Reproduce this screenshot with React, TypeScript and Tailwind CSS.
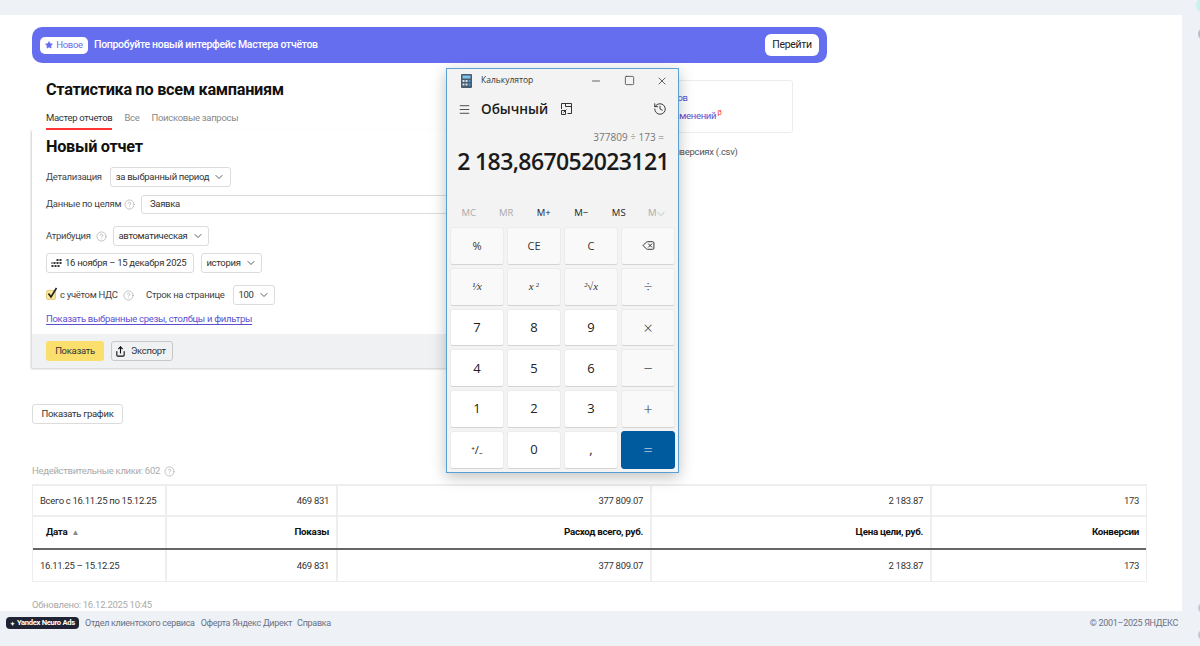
import { ChevronDown, CircleHelp, Delete, History, Menu, Minus, Share, Square, Star, X } from "lucide-react";

const CALC_KEYS = [
  { label: "%", kind: "fn" },
  { label: "CE", kind: "fn" },
  { label: "C", kind: "fn" },
  { label: "back", kind: "fn" },
  { label: "1/x", kind: "fn" },
  { label: "x2", kind: "fn" },
  { label: "root", kind: "fn" },
  { label: "÷", kind: "op" },
  { label: "7", kind: "num" },
  { label: "8", kind: "num" },
  { label: "9", kind: "num" },
  { label: "×", kind: "op" },
  { label: "4", kind: "num" },
  { label: "5", kind: "num" },
  { label: "6", kind: "num" },
  { label: "−", kind: "op" },
  { label: "1", kind: "num" },
  { label: "2", kind: "num" },
  { label: "3", kind: "num" },
  { label: "+", kind: "op" },
  { label: "+/-", kind: "num" },
  { label: "0", kind: "num" },
  { label: ",", kind: "num" },
  { label: "=", kind: "eq" },
];

const COLS = ["w-[134px]", "w-[171px]", "w-[314px]", "w-[280px]", "flex-1"];

function Help() {
  return <CircleHelp className="h-[11px] w-[11px] shrink-0 text-[#a9a9a9]" strokeWidth={1.5} />;
}

function Select({ label, className = "" }: { label: string; className?: string }) {
  return (
    <div className={`flex h-[20px] items-center justify-center gap-[4px] whitespace-nowrap rounded-[3px] border border-[#dcdcdc] bg-white text-[#333] ${className}`}>
      {label}
      <ChevronDown className="h-3 w-3" strokeWidth={1.6} />
    </div>
  );
}

function KeyLabel({ label }: { label: string }) {
  if (label === "back") return <Delete className="h-[13px] w-[13px] text-[#333]" strokeWidth={1.8} />;
  if (label === "1/x") return <span className="font-['Liberation_Serif',serif] text-[11px] italic">¹⁄x</span>;
  if (label === "x2")
    return (
      <span className="font-['Liberation_Serif',serif] text-[11px] italic">
        x<sup className="ml-[2px] text-[7px] not-italic">2</sup>
      </span>
    );
  if (label === "root") return <span className="font-['Liberation_Serif',serif] text-[11px] italic">²√x</span>;
  if (label === "+/-") return <span className="text-[11px]">⁺/₋</span>;
  return <span>{label}</span>;
}

function Calculator() {
  return (
    <div className="absolute left-[446px] top-[68px] flex h-[405px] w-[233px] flex-col border border-[#5a9fd4] bg-[#f3f3f3] font-['Open_Sans',sans-serif] tracking-normal text-[#1a1a1a] shadow-[0_4px_14px_rgba(0,0,0,0.25)]">
      <div className="flex h-[23px] items-center pl-[14px] text-[8.5px] text-[#333]">
        <svg width="11" height="14" viewBox="0 0 11 14" className="shrink-0">
          <rect width="11" height="14" rx="1" fill="#4a5b6c" />
          <rect x="1.5" y="1.5" width="8" height="3" fill="#7fc4ea" />
          <rect x="1.5" y="6" width="2" height="2" fill="#d8e4ec" />
          <rect x="4.5" y="6" width="2" height="2" fill="#d8e4ec" />
          <rect x="7.5" y="6" width="2" height="2" fill="#3b9be0" />
          <rect x="1.5" y="9.5" width="2" height="2" fill="#d8e4ec" />
          <rect x="4.5" y="9.5" width="2" height="2" fill="#d8e4ec" />
          <rect x="7.5" y="9.5" width="2" height="2" fill="#3b9be0" />
        </svg>
        <span className="ml-[9px]">Калькулятор</span>
        <div className="ml-auto flex items-center gap-[21.5px] pr-[10px]">
          <Minus className="h-3 w-3" strokeWidth={1.5} />
          <Square className="h-[11px] w-[11px]" strokeWidth={1.6} />
          <X className="h-3 w-3" strokeWidth={1.5} />
        </div>
      </div>
      <div className="mt-[4px] flex h-[26px] items-center pl-[11px] pr-[11px]">
        <Menu className="h-[13px] w-[13px]" strokeWidth={1.4} />
        <span className="ml-[10px] text-[13.5px] font-semibold">Обычный</span>
        <svg width="12" height="12" viewBox="0 0 12 12" className="ml-[13px]" fill="none" stroke="#333" strokeWidth="1">
          <path d="M.5 6V.5h10v10H6.5M4.5 .5v3M4.5 3.5h6" />
          <path d="M.5 7.5h4v4h-4zM5.5 6.5l-3 3" />
        </svg>
        <History className="ml-auto h-[14px] w-[14px]" strokeWidth={1.4} />
      </div>
      <div className="mt-[8px] pr-[14px] text-right text-[10px] leading-[14px] text-[#777]">377809 ÷ 173 =</div>
      <div className="mr-[9px] mt-[1px] text-right text-[23px] font-semibold leading-[32px] tracking-[-0.6px] whitespace-nowrap">2 183,867052023121</div>
      <div className="mt-[29px] grid grid-cols-6 px-[3px] text-center text-[9.5px] leading-[14px] font-medium">
        <span className="font-normal text-[#aaa]">MC</span>
        <span className="font-normal text-[#aaa]">MR</span>
        <span className="text-[#222]">M+</span>
        <span className="text-[#222]">M−</span>
        <span className="text-[#222]">MS</span>
        <span className="font-normal text-[#aaa]">M⌵</span>
      </div>
      <div className="mt-[7px] grid flex-1 grid-cols-4 grid-rows-6 gap-[3px] px-[3px] pb-[3px]">
        {CALC_KEYS.map((key) => (
          <div
            key={key.label}
            className={`flex items-center justify-center rounded-[3px] border ${
              key.kind === "eq"
                ? "border-[#005a9e] bg-[#005a9e] text-[16px] font-light text-white"
                : key.kind === "num"
                  ? "border-[#ececec] border-b-[#d4d4d4] bg-white text-[13px] text-[#222]"
                  : "border-[#ececec] border-b-[#d4d4d4] bg-[#f9f9f9] text-[#333]"
            } ${key.kind === "fn" ? "text-[11px]" : ""} ${key.kind === "op" ? "text-[16px] font-light" : ""}`}
          >
            <KeyLabel label={key.label} />
          </div>
        ))}
      </div>
    </div>
  );
}

function Row({ cells, className = "", bold = false }: { cells: string[]; className?: string; bold?: boolean }) {
  return (
    <div className={`flex ${className}`}>
      {cells.map((cell, i) => (
        <div
          key={i}
          className={`flex items-center whitespace-nowrap border-r-2 border-[#eeeeee] last:border-r-0 ${COLS[i]} ${i === 0 ? (bold ? "pl-[13px]" : "pl-[7px]") : "justify-end pr-[7px]"} ${bold ? "text-[9.8px] font-bold text-[#111]" : "text-[#333]"}`}
        >
          {cell}
          {bold && i === 0 && <span className="ml-[4px] text-[8px] font-normal text-[#888]">▲</span>}
        </div>
      ))}
    </div>
  );
}

export default function App() {
  return (
    <div className="relative flex h-[646px] w-[1200px] flex-col overflow-hidden bg-[#eef1f6] font-[Roboto,sans-serif] text-[9.5px] tracking-[-0.3px]">
      <div className="h-[15px] shrink-0" />
      <main className="h-[596px] w-[1182px] shrink-0 bg-white pl-[32px] pt-[12px]">
        {/* Banner */}
        <div className="flex h-[36px] w-[795px] items-center rounded-[10px] bg-[#666ef0] pl-[8px] pr-[8px]">
          <div className="flex h-[17px] w-[48px] items-center justify-center gap-[3px] rounded-[5px] bg-white text-[9.5px] text-[#666ef0]">
            <Star className="h-[8px] w-[8px] fill-[#666ef0]" />
            Новое
          </div>
          <span className="ml-[6px] text-[10.5px] font-medium text-white">Попробуйте новый интерфейс Мастера отчётов</span>
          <div className="ml-auto flex h-[22px] w-[54px] items-center justify-center rounded-[6px] bg-white text-[10.5px] text-[#222]">Перейти</div>
        </div>

        <div className="flex">
          {/* Report form */}
          <div className="w-[580px]">
            <h1 className="ml-[14px] mt-[16px] text-[16.3px] font-bold leading-[22px] text-[#111]">Статистика по всем кампаниям</h1>
            <div className="ml-[14px] mt-[6px] flex h-[23px] gap-[12px] text-[#888]">
              <span className="border-b-2 border-[#f33] pt-[4px] text-[#333]">Мастер отчетов</span>
              <span className="pt-[4px]">Все</span>
              <span className="pt-[4px]">Поисковые запросы</span>
            </div>
            <div className="shadow-[-1px_1px_2px_rgba(0,0,0,0.2)]">
              <div className="px-[14px] pb-[8px]">
                <h2 className="pt-[6px] text-[16.3px] font-bold leading-[22px] text-[#111]">Новый отчет</h2>
                <div className="mt-[9px] flex items-center text-[#444]">
                  <span className="w-[64px]">Детализация</span>
                  <Select label="за выбранный период" className="w-[121px]" />
                </div>
                <div className="mt-[8px] flex items-center text-[#444]">
                  <span className="w-[78px]">Данные по целям</span>
                  <Help />
                  <div className="ml-[6px] flex h-[19px] flex-1 items-center rounded-[3px] border border-[#dcdcdc] pl-[8px] text-[#333]">Заявка</div>
                </div>
                <div className="mt-[12px] flex items-center text-[#444]">
                  <span className="w-[50px]">Атрибуция</span>
                  <Help />
                  <Select label="автоматическая" className="ml-[6px] w-[96px]" />
                </div>
                <div className="mt-[7px] flex items-center gap-[7px]">
                  <div className="flex h-[20px] w-[148px] items-center gap-[2px] whitespace-nowrap rounded-[3px] border border-[#dcdcdc] pl-[4px] text-[#333]">
                    <svg width="12" height="8" viewBox="0 0 11 8" fill="#333" className="shrink-0">
                      <path d="M5 0h2v2H5zM8 0h2v2H8zM2 3h2v2H2zM5 3h2v2H5zM8 3h2v2H8zM0 3h1v2H0zM0 6h2v2H0zM3 6h2v2H3zM6 6h2v2H6z" />
                    </svg>
                    16 ноября – 15 декабря 2025
                  </div>
                  <Select label="история" className="w-[61px]" />
                </div>
                <div className="mt-[12px] flex items-center text-[#444]">
                  <div className="relative h-[10px] w-[10px] rounded-[2px] border border-[#e3cf7e] bg-[#fbe89a]">
                    <svg width="12" height="12" viewBox="0 0 12 12" fill="none" stroke="#222" strokeWidth="1.6" className="absolute -top-[4px] left-0">
                      <path d="M1.5 6.5 4 10 9.5 1" />
                    </svg>
                  </div>
                  <span className="ml-[4px] w-[60px]">с учётом НДС</span>
                  <span className="ml-[3px]"><Help /></span>
                  <span className="ml-[12px] w-[81px]">Строк на странице</span>
                  <Select label="100" className="ml-[6px] w-[42px]" />
                </div>
                <div className="mt-[7px] text-[9.5px] leading-[14px] text-[#5a4fcf] underline underline-offset-2">Показать выбранные срезы, столбцы и фильтры</div>
              </div>
              <div className="flex h-[34px] items-center gap-[7px] bg-[#f0f1f3] pl-[14px]">
                <div className="flex h-[20px] w-[58px] items-center justify-center rounded-[3px] bg-[#fbdf6c] text-[#333]">Показать</div>
                <div className="flex h-[20px] w-[62px] items-center gap-[5px] rounded-[3px] border border-[#c8c8c8] pl-[3px] text-[#333]">
                  <Share className="h-[11px] w-[11px] text-[#111]" strokeWidth={2.4} />
                  Экспорт
                </div>
              </div>
            </div>
          </div>

          {/* Links card */}
          <div className="ml-[8px] mt-[17px] w-[173px]">
            <div className="flex h-[53px] flex-col gap-[4px] rounded-[3px] border border-[#ececec] pl-[7px] pt-[10px] leading-[14px] text-[#5a4fcf]">
              <span className="whitespace-nowrap">Заказ отчетов</span>
              <span className="ml-[4px] whitespace-nowrap">
                История изменений<sup className="ml-[1px] text-[8px] text-[#f33]">β</sup>
              </span>
            </div>
            <div className="mt-[12px] whitespace-nowrap pl-[11px] text-[#555]">Отчёт о конверсиях (.csv)</div>
          </div>
        </div>

        <div className="mt-[36px] flex h-[20px] w-[91px] items-center justify-center rounded-[3px] border border-[#dcdcdc] text-[#333]">Показать график</div>

        <div className="mt-[40px] flex items-center gap-[4px] text-[#aaa]">
          Недействительные клики: 602
          <Help />
        </div>

        {/* Table */}
        <div className="mt-[6px] w-[1115px] border-x border-t-2 border-b border-[#eeeeee]">
          <Row className="h-[31px] border-b-2 border-[#eeeeee]" cells={["Всего с 16.11.25 по 15.12.25", "469 831", "377 809.07", "2 183.87", "173"]} />
          <Row className="h-[33px] border-b-2 border-[#666]" bold cells={["Дата", "Показы", "Расход всего, руб.", "Цена цели, руб.", "Конверсии"]} />
          <Row className="h-[31px]" cells={["16.11.25 – 15.12.25", "469 831", "377 809.07", "2 183.87", "173"]} />
        </div>

        <div className="mt-[16px] leading-[14px] text-[#aaa]">Обновлено: 16.12.2025 10:45</div>
      </main>

      {/* Footer */}
      <footer className="flex h-[35px] w-[1182px] shrink-0 items-start pl-[6px] pr-[4px] pt-[6px] text-[9px] text-[#6b7285]">
        <div className="flex h-[12px] w-[73px] items-center justify-center gap-[2px] whitespace-nowrap rounded-[4px] bg-[#1f2333] text-[7.6px] font-bold text-white">
          <span className="text-[6px]">✦</span>Yandex Neuro Ads
        </div>
        <span className="ml-[6px]">Отдел клиентского сервиса</span>
        <span className="ml-[6px]">Оферта Яндекс Директ</span>
        <span className="ml-[5px]">Справка</span>
        <span className="ml-auto">© 2001–2025 ЯНДЕКС</span>
      </footer>

      {/* Edge of the sidebar icons */}
      <div className="absolute left-[1196px] top-[-3px] h-[16px] w-[16px] rounded-full bg-[#c9f2ec]" />
      <div className="absolute left-[1198px] top-[28px] h-[12px] w-[12px] rounded-full bg-[#b7bbc6]" />
      <div className="absolute left-[1198px] top-[603px] h-[10px] w-[10px] rounded-full bg-[#c3c7d0]" />
      <div className="absolute left-[1198px] top-[630px] h-[10px] w-[10px] rounded-full bg-[#c3c7d0]" />

      <Calculator />
    </div>
  );
}
